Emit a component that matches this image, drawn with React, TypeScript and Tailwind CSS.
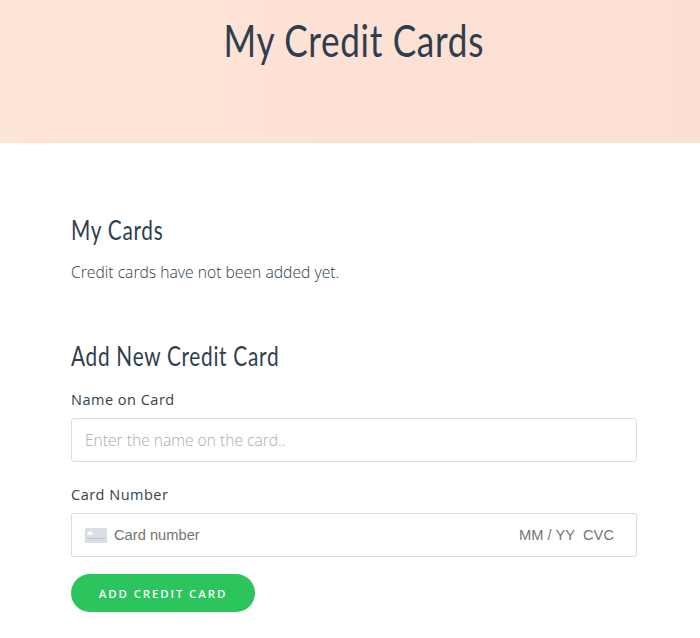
export default function App() {
  return (
    <div className="min-h-[638px] bg-white text-[#2f3b4a] font-['Open_Sans',sans-serif]">
      <header className="h-[143px] bg-gradient-to-r from-[#fee6d6] via-[#fde1d5] to-[#fde0d4] flex justify-center pt-[13px] pl-[8px]">
        <h1 className="font-['Lato',sans-serif] text-[44px] leading-[54px] font-normal tracking-[0.83px] text-[#2f3e4e] scale-x-[0.8]">
          My Credit Cards
        </h1>
      </header>

      <main className="ml-[71px] w-[566px]">
        <h2 className="mt-[70px] font-['Lato',sans-serif] text-[26px] leading-[34px] tracking-[0.9px] text-[#2f3e4e] origin-left scale-x-[0.8]">My Cards</h2>
        <p className="mt-[13px] text-[15.7px] leading-[24px] font-light text-[#2f3b4a]">
          Credit cards have not been added yet.
        </p>

        <h2 className="mt-[55px] font-['Lato',sans-serif] text-[26px] leading-[34px] tracking-[0.9px] text-[#2f3e4e] origin-left scale-x-[0.8]">
          Add New Credit Card
        </h2>

        <label className="block mt-[17px] text-[14.5px] leading-[20px] tracking-[0.5px] text-[#36414f]">Name on Card</label>
        <div className="mt-[8px] h-[44px] rounded-[3px] border border-[#dcdcdc] flex items-center px-[13px]">
          <span className="mt-[1px] text-[15.6px] font-light text-[#a9acb1]">Enter the name on the card..</span>
        </div>

        <label className="block mt-[23px] text-[14.5px] leading-[20px] tracking-[0.5px] text-[#36414f]">Card Number</label>
        <div className="mt-[8px] h-[44px] rounded-[3px] border border-[#dcdcdc] flex items-center pl-[13px] pr-[22px] font-['Liberation_Sans',sans-serif] text-[14.7px] text-[#757575]">
          <svg width="22" height="15" viewBox="0 0 22 15" className="mr-[7px]">
            <rect width="22" height="15" rx="1.5" fill="#d9dde6" />
            <rect x="2.5" y="3.5" width="5" height="3.5" rx="0.5" fill="#ffffff" />
            <path d="M2.5 10.5H19.5" stroke="#b4b8c2" strokeWidth="1" strokeDasharray="3.5 1" />
          </svg>
          <span>Card number</span>
          <span className="ml-auto">MM / YY</span>
          <span className="ml-[8px]">CVC</span>
        </div>

        <button className="mt-[17px] w-[184px] h-[38px] rounded-full bg-[#2cc45c] text-white text-[11.5px] font-semibold tracking-[1.85px] pt-[1px]">
          ADD CREDIT CARD
        </button>
      </main>
    </div>
  );
}
